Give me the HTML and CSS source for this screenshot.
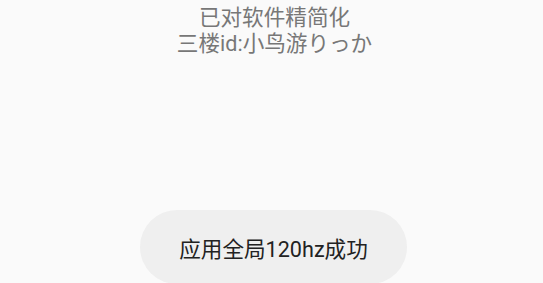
FILE: index.html
```html
<!DOCTYPE html>
<html lang="zh">
<head>
<meta charset="utf-8">
<link rel="stylesheet" href="styles.css">
</head>
<body>
<div class="screen">
  <div class="info">
    <div class="line">已对软件精简化</div>
    <div class="line">三楼id:小鸟游りっか</div>
  </div>
  <div class="toast">应用全局120hz成功</div>
</div>
</body>
</html>
```

FILE: styles.css
```css
html, body {
  margin: 0;
  padding: 0;
  background: #fafafa;
}
.screen {
  width: 543px;
  height: 283px;
  overflow: hidden;
  display: flex;
  flex-direction: column;
  align-items: center;
  font-family: Roboto, "Noto Sans CJK SC", sans-serif;
}
.info {
  margin-top: 5px;
  margin-left: 6px;
  text-align: center;
  color: #777777;
  font-size: 21.6px;
  line-height: 26px;
}
.toast {
  margin-top: 153px;
  margin-left: 4px;
  width: 267px;
  height: 74px;
  box-sizing: border-box;
  border-radius: 37px;
  background: #efefef;
  color: #222222;
  font-size: 21.6px;
  display: flex;
  align-items: center;
  justify-content: center;
  flex-shrink: 0;
}
```
